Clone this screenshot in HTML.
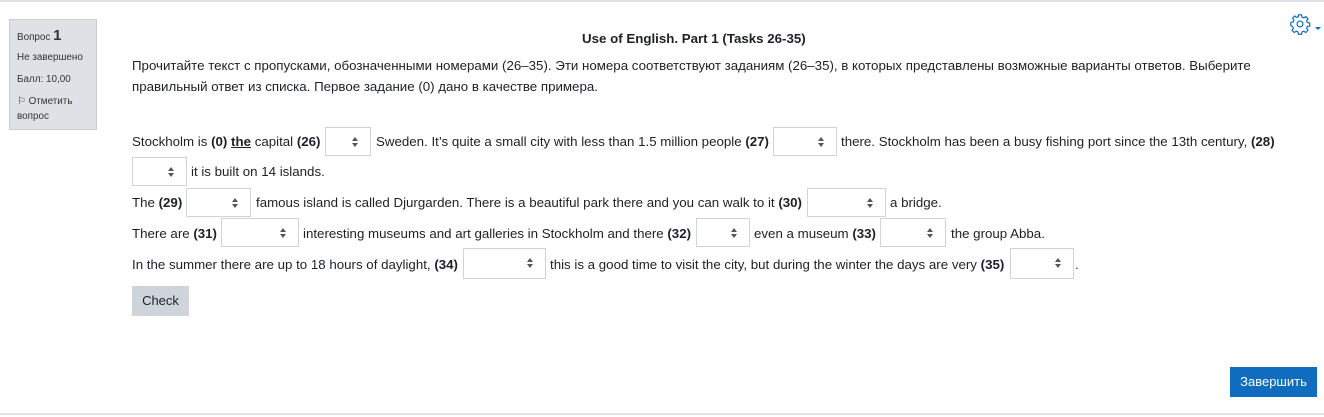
<!DOCTYPE html>
<html><head><meta charset="utf-8"><style>
body{margin:0;width:1324px;height:417px;position:relative;background:#fff;font-family:"Liberation Sans",Arial,sans-serif;color:#1d2125;overflow:hidden}
.a{position:absolute;white-space:nowrap;font-size:13.3px;line-height:16px}
.s{position:absolute;height:29px;border:1px solid #ced4da;box-sizing:border-box;background:#fff}
.s::after{content:"";position:absolute;right:12px;top:9px;width:0;height:0;border-left:3px solid transparent;border-right:3px solid transparent;border-bottom:4px solid #555}
.s::before{content:"";position:absolute;right:12px;top:15px;width:0;height:0;border-left:3px solid transparent;border-right:3px solid transparent;border-top:4px solid #555}
b{font-weight:bold}
.sb{font-size:9.9px;color:#333}
</style></head><body>
<div style="position:absolute;left:0;top:0;width:1324px;height:2px;background:#dee2e6"></div>
<div style="position:absolute;left:0;top:413px;width:1324px;height:2px;background:#dee2e6"></div>
<div style="position:absolute;left:9px;top:19px;width:86px;height:109px;background:#dee2e6;border:1px solid #ccc"></div>
<div class="a sb" style="left:17px;top:28px">Вопрос <b style="font-size:15px;color:#333">1</b></div>
<div class="a sb" style="left:17px;top:50px">Не завершено</div>
<div class="a sb" style="left:17px;top:72px">Балл: 10,00</div>
<div class="a sb" style="left:17px;top:94px">⚐ Отметить</div>
<div class="a sb" style="left:17px;top:109px">вопрос</div>
<svg style="position:absolute;left:1289px;top:13px" width="22" height="22" viewBox="0 0 24 24" fill="none" stroke="#0f6cbf" stroke-width="1.3"><circle cx="12" cy="12" r="3.2"/><path d="M10.3 2h3.4l.5 2.6 1.9.8 2.2-1.5 2.4 2.4-1.5 2.2.8 1.9 2.6.5v3.4l-2.6.5-.8 1.9 1.5 2.2-2.4 2.4-2.2-1.5-1.9.8-.5 2.6h-3.4l-.5-2.6-1.900-.8-2.2 1.5-2.4-2.4 1.5-2.2-.8-1.9L2 13.7v-3.4l2.6-.5.8-1.9-1.5-2.2 2.4-2.4 2.2 1.5 1.9-.8z"/></svg>
<div style="position:absolute;left:1315px;top:27px;border-left:3px solid transparent;border-right:3px solid transparent;border-top:3px solid #0f6cbf"></div>
<div class="a" style="left:582px;top:31px;font-weight:bold">Use of English. Part 1 (Tasks 26-35)</div>
<div class="a" style="left:132px;top:58px">Прочитайте текст с пропусками, обозначенными номерами (26–35). Эти номера соответствуют заданиям (26–35), в которых представлены возможные варианты ответов. Выберите</div>
<div class="a" style="left:132px;top:79px">правильный ответ из списка. Первое задание (0) дано в качестве примера.</div>

<div class="a" style="left:132px;top:134px">Stockholm is <b>(0)</b> <b><u>the</u></b> capital <b>(26)</b></div>
<div class="s" style="left:325px;top:127px;width:46px"></div>
<div class="a" style="left:376px;top:134px">Sweden. It’s quite a small city with less than 1.5 million people <b>(27)</b></div>
<div class="s" style="left:773px;top:127px;width:64px"></div>
<div class="a" style="left:841px;top:134px">there. Stockholm has been a busy fishing port since the 13th century, <b>(28)</b></div>
<div class="s" style="left:132px;top:157px;width:55px"></div>
<div class="a" style="left:191px;top:164px">it is built on 14 islands.</div>

<div class="a" style="left:132px;top:195px">The <b>(29)</b></div>
<div class="s" style="left:186px;top:188px;width:65px"></div>
<div class="a" style="left:256px;top:195px">famous island is called Djurgarden. There is a beautiful park there and you can walk to it <b>(30)</b></div>
<div class="s" style="left:807px;top:188px;width:79px"></div>
<div class="a" style="left:890px;top:195px">a bridge.</div>

<div class="a" style="left:132px;top:226px">There are <b>(31)</b></div>
<div class="s" style="left:221px;top:218px;width:78px"></div>
<div class="a" style="left:303px;top:226px">interesting museums and art galleries in Stockholm and there <b>(32)</b></div>
<div class="s" style="left:696px;top:218px;width:54px"></div>
<div class="a" style="left:754px;top:226px">even a museum <b>(33)</b></div>
<div class="s" style="left:880px;top:218px;width:66px"></div>
<div class="a" style="left:951px;top:226px">the group Abba.</div>

<div class="a" style="left:132px;top:257px">In the summer there are up to 18 hours of daylight, <b>(34)</b></div>
<div class="s" style="left:463px;top:248px;width:83px;height:31px"></div>
<div class="a" style="left:550px;top:257px">this is a good time to visit the city, but during the winter the days are very <b>(35)</b></div>
<div class="s" style="left:1010px;top:248px;width:64px;height:31px"></div>
<div class="a" style="left:1075px;top:257px">.</div>

<div style="position:absolute;left:132px;top:286px;width:57px;height:30px;background:#ced4da;font-size:13px;line-height:30px;text-align:center;color:#1d2125">Check</div>
<div style="position:absolute;left:1230px;top:367px;width:87px;height:30px;background:#0f6cbf;color:#fff;font-size:13px;line-height:30px;text-align:center">Завершить</div>
</body></html>
